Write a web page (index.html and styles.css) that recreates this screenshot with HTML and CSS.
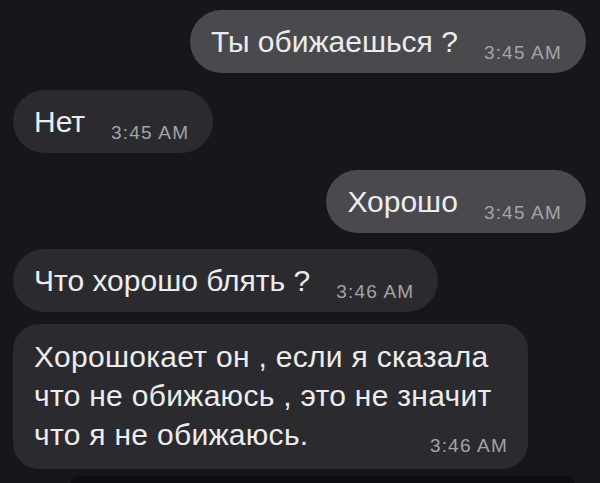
FILE: index.html
```html
<!DOCTYPE html>
<html lang="ru">
<head>
<meta charset="utf-8">
<title>Чат</title>
<link rel="stylesheet" href="styles.css">
</head>
<body>
<div class="chat">
  <div class="msg out m1">
    <span class="text">Ты обижаешься ?</span><span class="time">3:45 AM</span>
  </div>
  <div class="msg in m2">
    <span class="text">Нет</span><span class="time">3:45 AM</span>
  </div>
  <div class="msg out m3">
    <span class="text">Хорошо</span><span class="time">3:45 AM</span>
  </div>
  <div class="msg in m4">
    <span class="text">Что хорошо блять ?</span><span class="time">3:46 AM</span>
  </div>
  <div class="msg in multi m5">
    <div class="text">Хорошокает он , если я сказала<br>что не обижаюсь , это не значит<br>что я не обижаюсь.</div>
    <div class="time">3:46 AM</div>
  </div>
  <div class="next"></div>
</div>
</body>
</html>
```

FILE: styles.css
```css
html, body {
  margin: 0;
  padding: 0;
  background: #17171b;
}
body {
  width: 600px;
  height: 483px;
  overflow: hidden;
  font-family: "Liberation Sans", Arial, sans-serif;
  color: #ececee;
}
.chat {
  display: flex;
  flex-direction: column;
  padding: 10px 14px 0 13px;
}
.msg {
  display: flex;
  align-items: baseline;
  height: 63px;
  box-sizing: border-box;
  border-radius: 32px;
  padding: 0 24px 0 21px;
  white-space: nowrap;
}
.msg .text {
  font-size: 30px;
  line-height: 63px;
}
.msg .time {
  font-size: 19px;
  color: #a3a3a8;
  letter-spacing: 1.2px;
  margin-left: 26px;
  position: relative;
  top: 7px;
}
.out {
  align-self: flex-end;
  background: #4a4a4e;
}
.in {
  align-self: flex-start;
  background: #2b2b2f;
}
.m2 { margin-top: 17px; }
.m3 { margin-top: 17px; }
.m4 { margin-top: 16px; }
.m5 { margin-top: 12px; }
.multi {
  display: block;
  height: 145px;
  width: 515px;
  border-radius: 26px;
  padding: 13px 20px 0 21px;
  white-space: normal;
}
.multi .text {
  font-size: 30px;
  line-height: 39px;
  letter-spacing: 0.3px;
}
.multi .time {
  margin-left: 0;
  text-align: right;
  top: -18px;
  line-height: 20px;
}
.next {
  margin: 7px 11px 0 57px;
  height: 9px;
  background: #0d0d12;
  border-radius: 22px 22px 0 0;
}
```
